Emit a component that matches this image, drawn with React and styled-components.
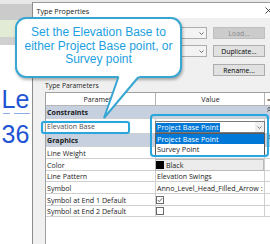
import React from "react";
import styled, { createGlobalStyle } from "styled-components";

const GlobalStyle = createGlobalStyle`
  html, body { margin: 0; padding: 0; background: #ffffff; }
  body { width: 270px; height: 244px; overflow: hidden; }
`;

const UI = `"Open Sans", "Liberation Sans", Arial, sans-serif`;
const TEAL = "#2aa6dc";

const Page = styled.div`
  position: relative;
  display: flex;
  width: 270px;
  height: 244px;
  overflow: hidden;
  background: #e9e9e9;
  font-family: ${UI};
  font-size: 7.1px;
  color: #1b1b1b;
`;

const ViewPane = styled.div`
  flex: none;
  width: 32px;
  display: flex;
  flex-direction: column;
  overflow: hidden;
  background: #ffffff;
`;

const Band = styled.div`
  flex: none;
  height: ${(p) => p.$h}px;
  background: ${(p) => p.$color};
`;

const LevelText = styled.div`
  margin-top: ${(p) => p.$top}px;
  padding-left: 1.5px;
  font-family: "Liberation Sans", Arial, sans-serif;
  font-size: 25px;
  line-height: 25px;
  color: #2153d3;
  white-space: nowrap;
`;

const LevelLine = styled.div`
  margin: 1px 2px 0 3px;
  height: 1px;
  background: linear-gradient(
    to right,
    #8eaee8 0 7px,
    transparent 7px 11px,
    #8eaee8 11px 100%
  );
`;

const Dialog = styled.div`
  flex: none;
  width: 250px;
  margin-top: 2px;
  display: flex;
  flex-direction: column;
  border-left: 1px solid #8b8b8b;
  border-top: 1px solid #9a9a9a;
  background: #f0f0f0;
`;

const TitleBar = styled.div`
  flex: none;
  height: 15px;
  display: flex;
  align-items: center;
  justify-content: space-between;
  padding: 0 11px 0 3.5px;
  background: #ffffff;
  font-size: 7.2px;
  color: #1a1a1a;
`;

const Body = styled.div`
  flex: 1;
  min-height: 0;
  display: flex;
  flex-direction: column;
  padding: 9px 0 0 12px;
`;

const TopForm = styled.div`
  display: grid;
  grid-template-columns: 34px 122px 52px;
  grid-template-rows: 12px 12px 13px;
  column-gap: 6px;
  row-gap: 6px;
`;

const Select = styled.div`
  grid-column: 2;
  grid-row: ${(p) => p.$row};
  height: 12px;
  box-sizing: border-box;
  display: flex;
  align-items: center;
  justify-content: flex-end;
  padding: 0 2px 0 3px;
  border: 1px solid #adadad;
  background: #f3f3f3;
`;

const Button = styled.div`
  grid-column: 3;
  grid-row: ${(p) => p.$row};
  align-self: end;
  height: 12px;
  box-sizing: border-box;
  display: flex;
  align-items: center;
  justify-content: center;
  border: 1px solid ${(p) => (p.$disabled ? "#bfbfbf" : "#adadad")};
  background: ${(p) => (p.$disabled ? "#cccccc" : "#e1e1e1")};
  color: ${(p) => (p.$disabled ? "#8a8a8a" : "#000000")};
  font-size: 6.8px;
`;

const SectionLabel = styled.div`
  margin-top: 4px;
  height: 12px;
  line-height: 12px;
  font-size: 6.8px;
  color: #222;
`;

const Table = styled.div`
  flex: 1;
  display: flex;
  flex-direction: column;
  background: #ffffff;
  border-left: 1px solid #a0a0a0;
  border-top: 1px solid #a0a0a0;
`;

const Row = styled.div`
  flex: none;
  display: grid;
  grid-template-columns: 110px 109px 1fr;
  height: ${(p) => p.$h}px;
  box-sizing: border-box;
  border-bottom: 1px solid ${(p) => (p.$header ? "#b5b5b5" : "#cfcfcf")};
  background: ${(p) => (p.$group ? "#c6d0df" : "transparent")};
`;

const Cell = styled.div`
  position: relative;
  display: flex;
  align-items: center;
  min-width: 0;
  padding-left: ${(p) => (p.$pad ?? 1)}px;
  justify-content: ${(p) => (p.$center ? "center" : "flex-start")};
  border-right: ${(p) => (p.$last ? "none" : `1px solid ${p.$header ? "#b5b5b5" : "#cfcfcf"}`)};
  color: ${(p) => p.$color || "#1b1b1b"};
  white-space: nowrap;
`;

const GroupLabel = styled.div`
  grid-column: 1 / 3;
  display: flex;
  align-items: center;
  padding-left: 1px;
  font-weight: 700;
  color: #1a1a1a;
`;

const GroupToggle = styled.div`
  grid-column: 3;
  display: flex;
  align-items: flex-start;
  padding: 1px 0 0 2px;
`;

const Combo = styled.div`
  position: relative;
  align-self: flex-start;
  flex: 1;
  margin: 2px -1px 0 -2px;
  height: 12px;
  box-sizing: border-box;
  display: flex;
  align-items: center;
  border: 1px solid #7a7a7a;
  background: #ffffff;
`;

const SelectedText = styled.span`
  height: 9px;
  line-height: 9px;
  padding: 0 1px;
  background: #0078d7;
  color: #ffffff;
  font-size: 7.3px;
`;

const ArrowBox = styled.span`
  margin-left: auto;
  width: 9px;
  height: 10px;
  display: flex;
  align-items: center;
  justify-content: center;
  background: #f0f0f0;
`;

const DropList = styled.div`
  position: absolute;
  z-index: 3;
  top: calc(100% + 1px);
  left: -1px;
  right: -1px;
  padding-bottom: 1px;
  border: 1px solid #5a5a5a;
  background: #ffffff;
`;

const DropItem = styled.div`
  height: 10px;
  line-height: 10px;
  padding-left: 1px;
  font-size: 7.3px;
  background: ${(p) => (p.$active ? "#0078d7" : "#ffffff")};
  color: ${(p) => (p.$active ? "#ffffff" : "#1b1b1b")};
`;

const ColorButton = styled.div`
  flex: 1;
  align-self: stretch;
  margin-left: -1px;
  display: flex;
  align-items: center;
  gap: 2px;
  border: 1px solid #b9b9b9;
  background: #ececec;
`;

const Swatch = styled.span`
  width: 8px;
  height: 8px;
  background: #000000;
`;

const CheckBox = styled.span`
  width: 8px;
  height: 8px;
  box-sizing: border-box;
  border: 1px solid #6a6a6a;
  background: #ffffff;
  display: flex;
  align-items: center;
  justify-content: center;
`;

const Callout = styled.div`
  position: absolute;
  z-index: 5;
  left: 15px;
  top: 17px;
  width: 167px;
  height: 61px;
  box-sizing: border-box;
  border: 2px solid #37a6d2;
  border-radius: 11px;
  background: #ffffff;
  box-shadow: 1px 2px 3px rgba(0, 0, 0, 0.3);
  display: flex;
  flex-direction: column;
  align-items: center;
  justify-content: center;
  padding-bottom: 2px;
  font-family: "Liberation Sans", Arial, sans-serif;
  font-size: 12px;
  line-height: 13.5px;
  color: #1c9fe0;
  text-align: center;
`;

const CalloutLine = styled.span`
  display: block;
  white-space: nowrap;
`;

const Tail = styled.svg`
  position: absolute;
  z-index: 6;
  left: 100px;
  top: 74px;
  overflow: visible;
`;

const Highlight = styled.div`
  position: absolute;
  z-index: 4;
  left: ${(p) => p.$x}px;
  top: ${(p) => p.$y}px;
  width: ${(p) => p.$w}px;
  height: ${(p) => p.$h}px;
  box-sizing: border-box;
  border: 2px solid ${TEAL};
  border-radius: ${(p) => p.$r}px;
  box-shadow: 0 0 1px #8fd6f3;
`;

const Chevron = ({ color = "#606060" }) => (
  <svg width="5" height="3" viewBox="0 0 5 3">
    <polyline points="0.5,0.5 2.5,2.5 4.5,0.5" fill="none" stroke={color} strokeWidth="0.9" />
  </svg>
);

const CloseIcon = () => (
  <svg width="7" height="7" viewBox="0 0 7 7">
    <path d="M0.5 0.5 L6.5 6.5 M6.5 0.5 L0.5 6.5" stroke="#222" strokeWidth="0.8" />
  </svg>
);

const CheckMark = () => (
  <svg width="6" height="6" viewBox="0 0 6 6">
    <polyline points="0.8,3 2.3,4.6 5.2,1.2" fill="none" stroke="#5a5a5a" strokeWidth="0.9" />
  </svg>
);

const CollapseIcon = () => (
  <svg width="4" height="5" viewBox="0 0 4 5">
    <polyline points="0.3,2 2,0.4 3.7,2" fill="none" stroke="#222" strokeWidth="0.8" />
    <polyline points="0.3,4.4 2,2.8 3.7,4.4" fill="none" stroke="#222" strokeWidth="0.8" />
  </svg>
);

const rows = [
  { type: "group", label: "Constraints", h: 13 },
  { type: "combo", label: "Elevation Base", h: 15 },
  { type: "group", label: "Graphics", h: 13 },
  { type: "text", label: "Line Weight", value: "", h: 12 },
  { type: "color", label: "Color", value: "Black", h: 12 },
  { type: "text", label: "Line Pattern", value: "Elevation Swings", h: 11 },
  { type: "text", label: "Symbol", value: "Anno_Level_Head_Filled_Arrow :", h: 12 },
  { type: "check", label: "Symbol at End 1 Default", checked: true, h: 12 },
  { type: "check", label: "Symbol at End 2 Default", checked: false, h: 11 },
];

function ValueCell({ row }) {
  if (row.type === "combo") {
    return (
      <Cell>
        <Combo>
          <SelectedText>Project Base Point</SelectedText>
          <ArrowBox>
            <Chevron color="#707070" />
          </ArrowBox>
          <DropList>
            <DropItem $active>Project Base Point</DropItem>
            <DropItem>Survey Point</DropItem>
          </DropList>
        </Combo>
      </Cell>
    );
  }
  if (row.type === "color") {
    return (
      <Cell $pad={0}>
        <ColorButton>
          <Swatch />
          <span>{row.value}</span>
        </ColorButton>
      </Cell>
    );
  }
  if (row.type === "check") {
    return (
      <Cell $pad={0}>
        <CheckBox>{row.checked && <CheckMark />}</CheckBox>
      </Cell>
    );
  }
  return <Cell>{row.value}</Cell>;
}

export default function App() {
  return (
    <>
      <GlobalStyle />
      <Page>
        <ViewPane>
          <Band $h={4} $color="#e8e8e8" />
          <Band $h={16} $color="#cbcbcb" />
          <Band $h={17} $color="#e2ebd6" />
          <Band $h={8} $color="#d0d0d0" />
          <LevelText $top={41.8}>Le</LevelText>
          <LevelLine />
          <LevelText $top={8.5}>36</LevelText>
        </ViewPane>

        <Dialog>
          <TitleBar>
            <span>Type Properties</span>
            <CloseIcon />
          </TitleBar>
          <Body>
            <TopForm>
              <Select $row={1}>
                <Chevron />
              </Select>
              <Button $row={1} $disabled>
                Load...
              </Button>
              <Select $row={2}>
                <Chevron />
              </Select>
              <Button $row={2}>Duplicate...</Button>
              <Button $row={3}>Rename...</Button>
            </TopForm>

            <SectionLabel>Type Parameters</SectionLabel>

            <Table>
              <Row $h={13} $header>
                <Cell $center $header>Parameter</Cell>
                <Cell $center $header>Value</Cell>
                <Cell $last $header $pad={2}>=</Cell>
              </Row>
              {rows.map((row) =>
                row.type === "group" ? (
                  <Row key={row.label} $h={row.h} $group>
                    <GroupLabel>{row.label}</GroupLabel>
                    <GroupToggle>
                      <CollapseIcon />
                    </GroupToggle>
                  </Row>
                ) : (
                  <Row key={row.label} $h={row.h}>
                    <Cell $color={row.type === "combo" ? "#4a4a4a" : undefined}>{row.label}</Cell>
                    <ValueCell row={row} />
                    <Cell $last />
                  </Row>
                )
              )}
            </Table>
          </Body>
        </Dialog>

        <Callout>
          <CalloutLine>Set the Elevation Base to</CalloutLine>
          <CalloutLine>either Project Base point, or</CalloutLine>
          <CalloutLine>Survey point</CalloutLine>
        </Callout>

        <Tail width="46" height="48" viewBox="0 0 46 48">
          <polygon points="19.5,0 4,44 41,0" fill="#ffffff" />
          <polyline
            points="18.44,3 4,44 38.48,3"
            fill="none"
            stroke="#37a6d2"
            strokeWidth="2"
            strokeLinejoin="miter"
          />
        </Tail>

        <Highlight $x={41} $y={121} $w={89} $h={13} $r={3} />
        <Highlight $x={150} $y={114} $w={119} $h={43} $r={4} />
      </Page>
    </>
  );
}
